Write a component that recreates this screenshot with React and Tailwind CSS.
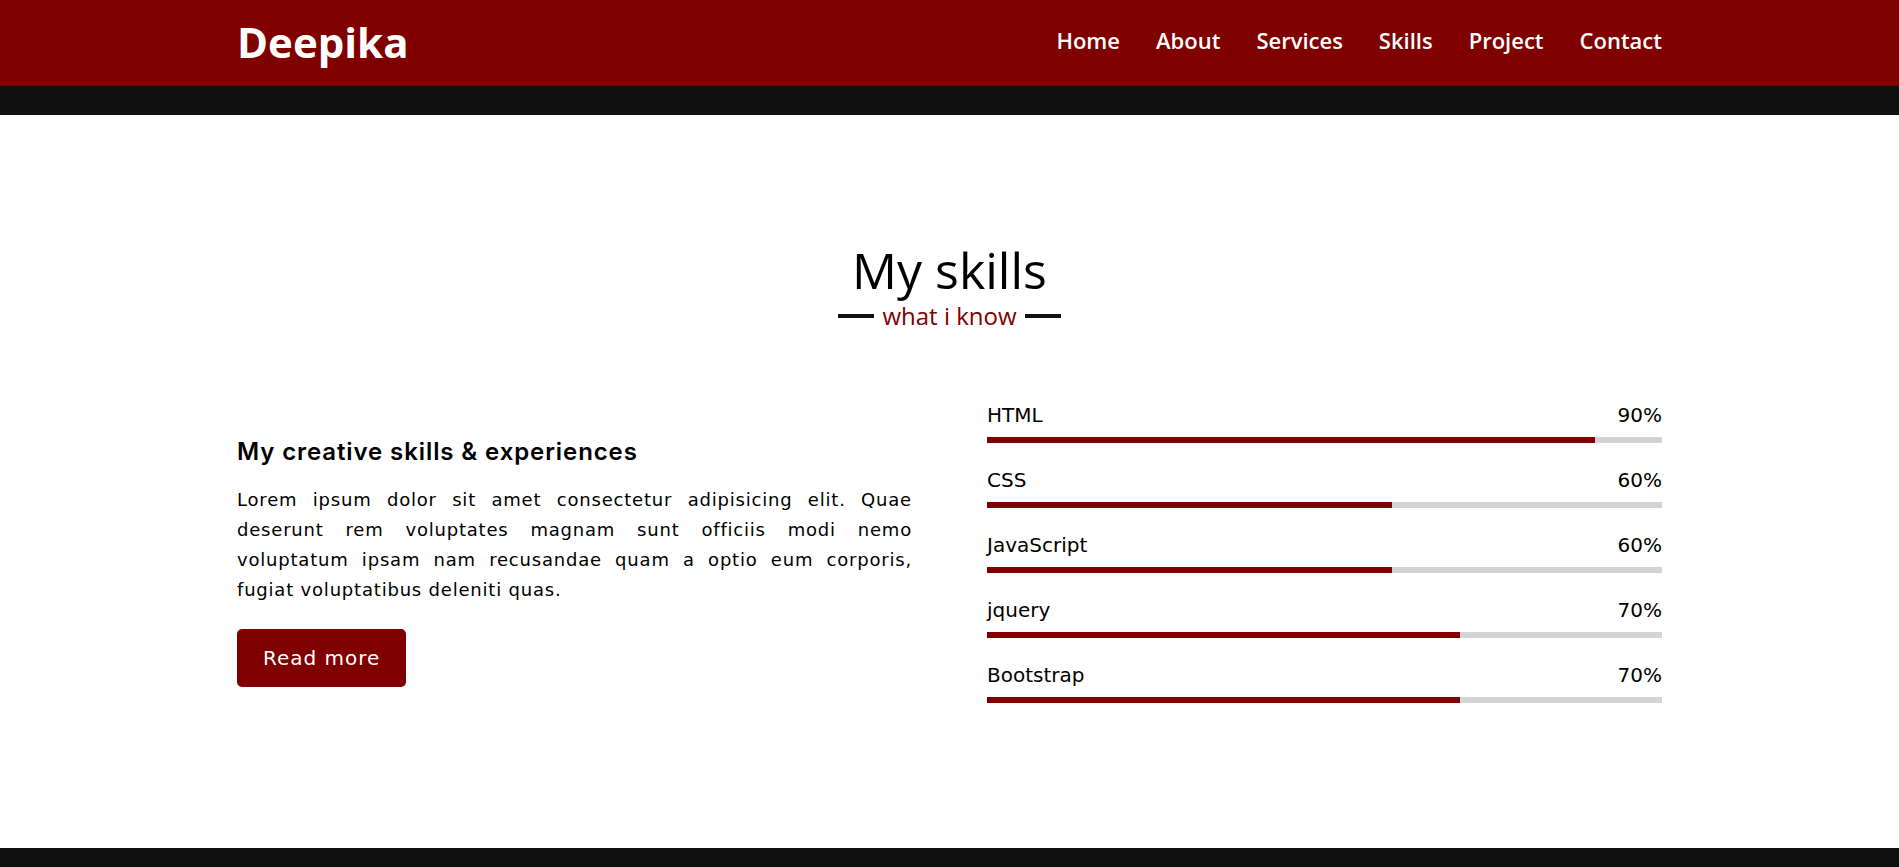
import React from 'react'

const skills = [
  { name: 'HTML', value: 90 },
  { name: 'CSS', value: 60 },
  { name: 'JavaScript', value: 60 },
  { name: 'jquery', value: 70 },
  { name: 'Bootstrap', value: 70 },
]

const links = ['Home', 'About', 'Services', 'Skills', 'Project', 'Contact']

const App = () => {
  return (
    <div className="min-h-screen flex flex-col bg-white font-['DejaVu_Sans',sans-serif] text-black">
      {/* Navbar */}
      <nav className="h-[86px] bg-[#800000]">
        <div className="w-[1425px] mx-auto h-full flex items-center justify-between font-['Open_Sans',sans-serif]">
          <a href="#" className="text-[42px] font-bold text-white leading-none pb-[3px]">Deepika</a>
          <ul className="flex items-center gap-[36px] pb-[5px]">
            {links.map((link) => (
              <li key={link}>
                <a href="#" className="text-[22px] font-semibold text-white">{link}</a>
              </li>
            ))}
          </ul>
        </div>
      </nav>
      <div className="h-[29px] bg-[#111111]" />

      {/* Skills */}
      <section className="flex-1 pt-[125px]">
        <div className="w-[1425px] mx-auto">
          <div className="flex flex-col items-center font-['Open_Sans',sans-serif]">
            <h2 className="text-[50px] leading-[60px] font-medium">My skills</h2>
            <div className="flex items-center gap-[8px] mt-[2px]">
              <span className="w-[36px] h-[4px] bg-[#111111]" />
              <span className="text-[24px] leading-[28px] font-medium text-[#800000]">what i know</span>
              <span className="w-[36px] h-[4px] bg-[#111111]" />
            </div>
          </div>

          <div className="grid grid-cols-2 gap-[75px] items-start mt-[70px]">
            <div className="mt-[34px]">
              <h3 className="font-['Inter',sans-serif] text-[24px] leading-[36px] font-semibold tracking-[0.9px] mb-[15px]">My creative skills &amp; experiences</h3>
              <p className="text-[18px] leading-[30px] tracking-[0.8px] text-justify">
                Lorem ipsum dolor sit amet consectetur adipisicing elit. Quae deserunt rem voluptates magnam sunt officiis modi nemo voluptatum ipsam nam recusandae quam a optio eum corporis, fugiat voluptatibus deleniti quas.
              </p>
              <a href="#" className="inline-flex items-center h-[58px] mt-[24px] bg-[#800000] text-white text-[20px] leading-[28px] tracking-[1px] px-[26px] rounded-[5px]">Read more</a>
            </div>

            <div className="flex flex-col gap-[22px]">
              {skills.map((skill) => (
                <div key={skill.name}>
                  <div className="flex justify-between text-[20px] leading-[30px]">
                    <span>{skill.name}</span>
                    <span>{skill.value}%</span>
                  </div>
                  <div className="h-[6px] bg-[#d3d3d3] mt-[7px]">
                    <div className="h-full bg-[#800000]" style={{ width: `${skill.value}%` }} />
                  </div>
                </div>
              ))}
            </div>
          </div>
        </div>
      </section>

      <footer className="h-[19px] bg-[#111111]" />
    </div>
  )
}

export default App
